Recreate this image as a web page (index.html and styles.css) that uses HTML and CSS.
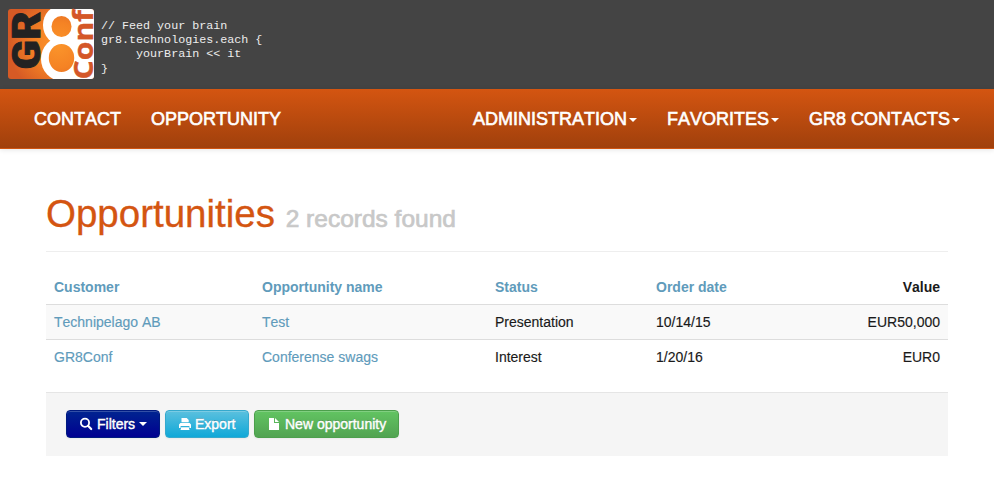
FILE: index.html
```html
<!DOCTYPE html>
<html lang="en">
<head>
<meta charset="utf-8">
<title>Opportunities</title>
<link rel="stylesheet" href="styles.css">
</head>
<body>
<header class="banner">
  <svg class="logo" width="86" height="70" viewBox="0 0 86 70">
    <defs>
      <radialGradient id="glow" gradientUnits="userSpaceOnUse" cx="50" cy="36" r="50">
        <stop offset="0" stop-color="#fb952b"/><stop offset=".45" stop-color="#f58324"/><stop offset="1" stop-color="#d65a25"/>
      </radialGradient>
      <clipPath id="tile"><rect width="86" height="70" rx="3"/></clipPath>
    </defs>
    <g clip-path="url(#tile)">
      <rect width="86" height="70" fill="url(#glow)"/>
      <path d="M54 0H86V70H54Z" fill="#fff"/>
      <ellipse cx="54" cy="16" rx="19" ry="20" fill="#fff"/>
      <ellipse cx="54" cy="50" rx="21" ry="22" fill="#fff"/>
      <ellipse cx="53.5" cy="17.5" rx="10" ry="10.5" fill="url(#glow)"/>
      <ellipse cx="53.5" cy="49" rx="12.7" ry="14" fill="url(#glow)"/>
    </g>
    <text class="logo-gr" transform="translate(31.5 60.5) rotate(-90)" textLength="58" lengthAdjust="spacingAndGlyphs">GR</text>
    <text class="logo-conf" transform="translate(85 70.5) rotate(-90)" textLength="69.5" lengthAdjust="spacingAndGlyphs">Conf</text>
  </svg>
  <pre class="slogan">// Feed your brain
gr8.technologies.each {
     yourBrain &lt;&lt; it
}</pre>
</header>
<nav class="navbar">
  <a>CONTACT</a>
  <a>OPPORTUNITY</a>
  <a class="push">ADMINISTRATION<i class="caret"></i></a>
  <a>FAVORITES<i class="caret"></i></a>
  <a>GR8 CONTACTS<i class="caret"></i></a>
</nav>
<main class="content">
  <h1>Opportunities <small>2 records found</small></h1>
  <table>
    <colgroup><col class="c1"><col class="c2"><col class="c3"><col class="c4"><col></colgroup>
    <thead>
      <tr><th><a>Customer</a></th><th><a>Opportunity name</a></th><th><a>Status</a></th><th><a>Order date</a></th><th class="money">Value</th></tr>
    </thead>
    <tbody>
      <tr><td><a>Technipelago AB</a></td><td><a>Test</a></td><td>Presentation</td><td>10/14/15</td><td class="money">EUR50,000</td></tr>
      <tr><td><a>GR8Conf</a></td><td><a>Conferense swags</a></td><td>Interest</td><td>1/20/16</td><td class="money">EUR0</td></tr>
    </tbody>
  </table>
  <div class="actions">
    <a class="btn primary"><svg width="14" height="14" viewBox="0 0 14 14"><circle cx="6" cy="5.8" r="4.1" fill="none" stroke="#fff" stroke-width="1.8"/><path d="M9 8.8l3.2 3.2" stroke="#fff" stroke-width="2.2" stroke-linecap="round"/></svg>Filters<i class="caret"></i></a>
    <a class="btn info"><svg width="14" height="14" viewBox="0 0 14 14"><path d="M3.5 1h5.2l2 2v2.3h-7.2zM1 7.4L2.4 6h9.2L13 7.4V11h-1.6V9H2.6v2H1zM3.2 10.2h7.6l.7 2.8h-9z" fill="#fff"/></svg>Export</a>
    <a class="btn success"><svg width="14" height="14" viewBox="0 0 14 14"><path d="M2 1h5v5h5v7H2zM8 1l4 4H8z" fill="#fff"/></svg>New opportunity</a>
  </div>
</main>
</body>
</html>
```
FILE: styles.css
```css
* { box-sizing: border-box; }
body {
  margin: 0;
  background: #fff;
  color: #1a1a1a;
  font: 14px/20px "Liberation Sans", Arial, sans-serif;
  font-kerning: none;
}
.banner {
  display: flex;
  height: 89px;
  padding: 9px 8px 0;
  background: #444;
}
.logo { display: block; overflow: visible; }
.logo-gr { font: 900 38px Roboto, sans-serif; fill: #222; stroke: #222; stroke-width: .8px; }
.logo-conf { font: 700 26px "Open Sans", sans-serif; fill: #d45728; stroke: #d45728; stroke-width: .4px; }
.slogan {
  margin: 10px 0 0 7px;
  color: #ededed;
  font: 11.7px/14.2px "Liberation Mono", "Courier New", monospace;
}
.navbar {
  display: flex;
  gap: 30px;
  height: 60px;
  padding: 0 34px;
  color: #fff;
  font-size: 18px;
  line-height: 61px;
  background: linear-gradient(#d45511, #a0400c);
  border-bottom: 1px solid #cf5411;
  box-shadow: 0 1px 5px rgba(0, 0, 0, .1);
  -webkit-text-stroke: .6px #fff;
}
.push { margin-left: auto; }
.caret {
  display: inline-block;
  margin-left: 2px;
  border: 4px solid transparent;
  border-top-color: currentColor;
  border-bottom: 0;
  vertical-align: middle;
}
.content { padding: 35px 46px 0; }
h1 {
  height: 68px;
  margin: 0 0 18px;
  padding-top: 10px;
  border-bottom: 1px solid #eee;
  color: #d45511;
  font-size: 38.5px;
  font-weight: 400;
  line-height: 40px;
  -webkit-text-stroke: .3px currentColor;
}
small { color: #c8c8c8; font-size: 24.5px; -webkit-text-stroke: .7px currentColor; }
table { width: 100%; border-spacing: 0; table-layout: fixed; }
.c1 { width: 208px; }
.c2 { width: 233px; }
.c3 { width: 161px; }
.c4 { width: 130px; }
th, td { height: 35px; padding: 7px 8px; text-align: left; }
th { height: 34px; }
td { border-top: 1px solid #ddd; -webkit-text-stroke: .15px currentColor; }
tbody tr:first-child { background: #f9f9f9; }
table a { color: #609bbb; }
.money { text-align: right; }
.actions {
  display: flex;
  gap: 5px;
  height: 64px;
  margin-top: 18px;
  padding: 17px 20px;
  background: #f5f5f5;
  border-top: 1px solid #e5e5e5;
}
.btn {
  display: flex;
  align-items: center;
  height: 28px;
  padding: 0 0 0 12px;
  white-space: nowrap;
  border: 1px solid;
  border-radius: 4px;
  color: #fff;
  text-shadow: 0 -1px 0 rgba(0, 0, 0, .25);
  box-shadow: inset 0 1px 0 rgba(255, 255, 255, .2), 0 1px 2px rgba(0, 0, 0, .05);
  -webkit-text-stroke: .4px #fff;
}
.btn svg { margin-right: 4px; }
.info svg { margin-right: 3px; }
.btn .caret { margin-left: 4px; }
.primary { width: 94px; background: linear-gradient(#002490, #000091); border-color: #001a80; }
.info { width: 84px; background: linear-gradient(#5bc0de, #0fa8d8); border-color: #35a9cd; }
.success { width: 145px; background: linear-gradient(#62c462, #51a351); border-color: #4c9f4c; }
```
